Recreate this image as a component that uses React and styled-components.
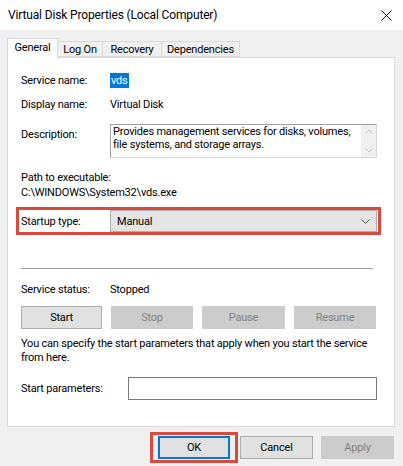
import React from "react";
import styled, { createGlobalStyle } from "styled-components";

const Global = createGlobalStyle`
  html, body { margin: 0; padding: 0; background: #f0f0f0; }
  body { font-family: Roboto, "Liberation Sans", sans-serif; font-size: 11px; letter-spacing: -0.2px; color: #000; }
  * { box-sizing: border-box; }
`;

const Window = styled.div`
  width: 403px;
  height: 466px;
  background: #f0f0f0;
  display: flex;
  flex-direction: column;
  overflow: hidden;
`;

const TitleBar = styled.div`
  height: 30px;
  background: #fff;
  display: flex;
  align-items: center;
  justify-content: space-between;
  padding: 0 0 0 8px;
`;

const Title = styled.div`
  font-size: 12px;
  letter-spacing: -0.15px;
  color: #000;
`;

const Close = styled.div`
  width: 34px;
  height: 30px;
  display: flex;
  align-items: center;
  justify-content: center;
`;

const Body = styled.div`
  padding: 8px 8px 0 7px;
  display: flex;
  flex-direction: column;
`;

const Tabs = styled.div`
  display: flex;
  align-items: flex-end;
  height: 19px;
  position: relative;
  z-index: 1;
`;

const Tab = styled.div`
  height: ${(p) => (p.$active ? "20px" : "16px")};
  width: ${(p) => p.$w}px;
  background: ${(p) => (p.$active ? "#fff" : "#f0f0f0")};
  border: 1px solid #d9d9d9;
  border-bottom: ${(p) => (p.$active ? "none" : "1px solid #d9d9d9")};
  margin-left: ${(p) => (p.$first ? "0" : "-1px")};
  margin-bottom: ${(p) => (p.$active ? "-1px" : "0")};
  display: flex;
  align-items: center;
  justify-content: center;
  white-space: nowrap;
  padding-bottom: ${(p) => (p.$active ? "2px" : "0")};
`;

const Panel = styled.div`
  background: #fff;
  border: 1px solid #d9d9d9;
  height: 370px;
  width: 388px;
  padding: 12px 13px 0 13px;
  display: flex;
  flex-direction: column;
`;

const Row = styled.div`
  display: flex;
  align-items: ${(p) => p.$align || "center"};
  height: ${(p) => p.$h || 20}px;
  margin-top: ${(p) => p.$mt || 0}px;
`;

const Label = styled.div`
  width: ${(p) => p.$w || 89}px;
  flex-shrink: 0;
  white-space: nowrap;
  padding-top: ${(p) => p.$pt || 0}px;
  padding-left: ${(p) => p.$pl || 0}px;
`;

const Value = styled.div`
  white-space: nowrap;
`;

const Selected = styled.span`
  background: #0078d7;
  color: #fff;
  padding: 1px 1px;
`;

const DescBox = styled.div`
  width: 267px;
  height: 34px;
  border: 1px solid #d9d9d9;
  border-left-color: #a0a0a0;
  border-top-color: #a0a0a0;
  display: flex;
`;

const DescText = styled.div`
  flex: 1;
  padding: 0 0 0 2px;
  line-height: 13px;
  white-space: nowrap;
`;

const Scroll = styled.div`
  width: 15px;
  background: #f0f0f0;
  display: flex;
  flex-direction: column;
  justify-content: space-between;
  align-items: center;
  padding: 4px 0;
`;

const Block = styled.div`
  margin-top: ${(p) => p.$mt || 0}px;
  line-height: ${(p) => p.$lh || 15}px;
  white-space: nowrap;
`;

const Highlight = styled.div`
  margin: ${(p) => p.$m};
  width: 365px;
  border: 3px solid #d94a3d;
  display: flex;
  align-items: center;
`;

const Combo = styled.div`
  width: 267px;
  height: 22px;
  background: #e5e5e5;
  border: 1px solid #adadad;
  display: flex;
  align-items: center;
  justify-content: space-between;
  padding: 0 6px 0 6px;
`;

const Sep = styled.div`
  height: 1px;
  background: #a0a0a0;
  margin-top: ${(p) => p.$mt}px;
  width: 352px;
`;

const ButtonRow = styled.div`
  display: flex;
  gap: ${(p) => p.$gap || 10}px;
  margin-top: ${(p) => p.$mt || 0}px;
`;

const Button = styled.div`
  width: ${(p) => p.$w || 81}px;
  height: 23px;
  flex-shrink: 0;
  border: 1px solid ${(p) => (p.$disabled ? "#cccccc" : p.$default ? "#0078d7" : "#adadad")};
  background: ${(p) => (p.$disabled ? "#cccccc" : "#e1e1e1")};
  color: ${(p) => (p.$disabled ? "#838383" : "#000")};
  display: flex;
  align-items: center;
  justify-content: center;
  box-shadow: ${(p) => (p.$default ? "inset 0 0 0 1px #0078d7" : "none")};
`;

const Input = styled.div`
  width: 249px;
  height: 23px;
  border: 1px solid #7a7a7a;
  background: #fff;
`;

const Footer = styled.div`
  display: flex;
  justify-content: flex-end;
  align-items: center;
  padding: 5px 1px 0 0;
`;

const OkFrame = styled.div`
  width: 88px;
  border: 3px solid #d94a3d;
  padding: 1px 4px 1px 5px;
  display: flex;
  margin-right: 2px;
`;

const Spacer = styled.div`
  width: ${(p) => p.$w}px;
`;

export default function App() {
  return (
    <>
      <Global />
      <Window>
        <TitleBar>
          <Title>Virtual Disk Properties (Local Computer)</Title>
          <Close>
            <svg width="11" height="11" viewBox="0 0 11 11">
              <path d="M0.5 0.5 L10.5 10.5 M10.5 0.5 L0.5 10.5" stroke="#111" strokeWidth="1" />
            </svg>
          </Close>
        </TitleBar>
        <Body>
          <Tabs>
            <Tab $active $first $w={51}>General</Tab>
            <Tab $w={46}>Log On</Tab>
            <Tab $w={60}>Recovery</Tab>
            <Tab $w={79}>Dependencies</Tab>
          </Tabs>
          <Panel>
            <Row>
              <Label>Service name:</Label>
              <Value><Selected>vds</Selected></Value>
            </Row>
            <Row $mt={4}>
              <Label>Display name:</Label>
              <Value>Virtual Disk</Value>
            </Row>
            <Row $h={34} $mt={10} $align="flex-start">
              <Label $pt={4}>Description:</Label>
              <DescBox>
                <DescText>
                  Provides management services for disks, volumes,
                  <br />
                  file systems, and storage arrays.
                </DescText>
                <Scroll>
                  <svg width="8" height="5" viewBox="0 0 8 5">
                    <path d="M0.5 4.5 L4 1 L7.5 4.5" stroke="#c4c4c4" fill="none" />
                  </svg>
                  <svg width="8" height="5" viewBox="0 0 8 5">
                    <path d="M0.5 0.5 L4 4 L7.5 0.5" stroke="#c4c4c4" fill="none" />
                  </svg>
                </Scroll>
              </DescBox>
            </Row>
            <Block $mt={12}>
              Path to executable:
              <br />
              C:\WINDOWS\System32\vds.exe
            </Block>
            <Highlight $m="7px 0 0 -5px">
              <Label $w={91} $pl={2}>Startup type:</Label>
              <Combo>
                <span>Manual</span>
                <svg width="9" height="5" viewBox="0 0 9 5">
                  <path d="M0.5 0.5 L4.5 4.5 L8.5 0.5" stroke="#555" fill="none" />
                </svg>
              </Combo>
            </Highlight>
            <Sep $mt={33} />
            <Row $mt={10}>
              <Label>Service status:</Label>
              <Value>Stopped</Value>
            </Row>
            <ButtonRow $mt={7} $gap={9}>
              <Button $w={81}>Start</Button>
              <Button $w={82} $disabled>Stop</Button>
              <Button $w={83} $disabled>Pause</Button>
              <Button $w={82} $disabled>Resume</Button>
            </ButtonRow>
            <Block $mt={8} $lh={14}>
              You can specify the start parameters that apply when you start the service
              <br />
              from here.
            </Block>
            <Row $h={23} $mt={12}>
              <Label $w={107}>Start parameters:</Label>
              <Input />
            </Row>
          </Panel>
          <Footer>
            <OkFrame>
              <Button $w={72} $default>OK</Button>
            </OkFrame>
            <Button $w={73}>Cancel</Button>
            <Spacer $w={8} />
            <Button $w={73} $disabled>Apply</Button>
          </Footer>
        </Body>
      </Window>
    </>
  );
}
